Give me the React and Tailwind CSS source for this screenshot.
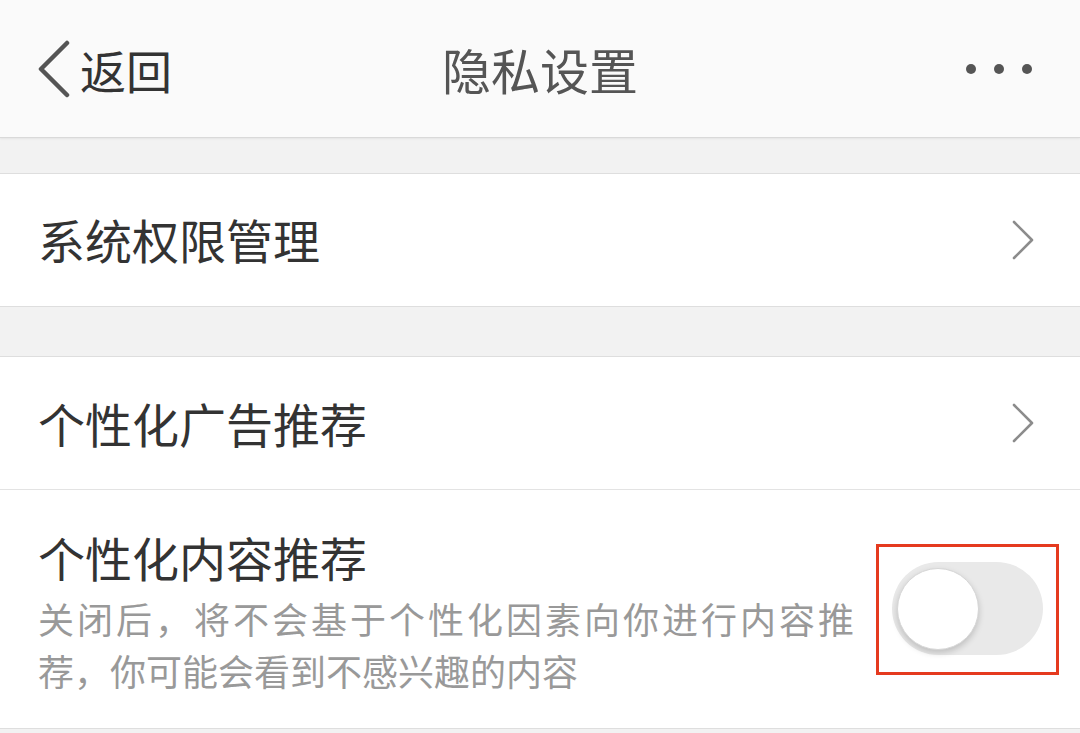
import React, { useState } from "react";

const font = { fontFamily: '"Noto Sans CJK SC", "Noto Sans", sans-serif' };

function ChevronRight() {
  return (
    <svg width="22" height="40" viewBox="0 0 22 40" fill="none">
      <path d="M2 2 L20 20 L2 38" stroke="#8c8c8c" strokeWidth="2.6" strokeLinecap="round" strokeLinejoin="round" />
    </svg>
  );
}

function ChevronLeft() {
  return (
    <svg width="36" height="58" viewBox="0 0 36 58" fill="none">
      <path d="M31 3 L5 29 L31 55" stroke="#555555" strokeWidth="4.5" strokeLinecap="round" strokeLinejoin="round" />
    </svg>
  );
}

function Toggle({ on, onChange }) {
  return (
    <button
      type="button"
      onClick={() => onChange(!on)}
      className={`relative w-[151px] h-[93px] rounded-full ${on ? "bg-[#4cd964]" : "bg-[#e9e9e9]"}`}
    >
      <span
        className={`absolute top-[6px] w-[82px] h-[82px] rounded-full bg-white border border-[#d6d6d6] shadow-[0_3px_6px_rgba(0,0,0,0.18)] ${
          on ? "left-[64px]" : "left-[5px]"
        }`}
      />
    </button>
  );
}

export default function App() {
  const [personalized, setPersonalized] = useState(false);

  return (
    <div className="w-[1080px] h-[733px] bg-[#f2f2f2] overflow-hidden" style={font}>
      {/* Header */}
      <div className="h-[138px] bg-[#fafafa] border-b border-[#d9d9d9] shadow-[0_1px_2px_rgba(0,0,0,0.06)] flex items-center justify-between pl-[36px] pr-[48px] relative">
        <button className="flex items-center gap-[8px] text-[#333333]">
          <ChevronLeft />
          <span className="text-[46px] leading-none">返回</span>
        </button>
        <h1 className="absolute left-1/2 -translate-x-1/2 text-[49px] text-[#555555] leading-none">
          隐私设置
        </h1>
        <div className="flex items-center gap-[18px]">
          <span className="w-[10px] h-[10px] rounded-full bg-[#555555]" />
          <span className="w-[10px] h-[10px] rounded-full bg-[#555555]" />
          <span className="w-[10px] h-[10px] rounded-full bg-[#555555]" />
        </div>
      </div>

      {/* Group 1 */}
      <div className="mt-[35px] bg-white border-y border-[#dedede]">
        <div className="h-[132px] flex items-center justify-between pl-[38px] pr-[46px]">
          <span className="text-[47px] text-[#333333] leading-none pb-[4px]">系统权限管理</span>
          <ChevronRight />
        </div>
      </div>

      {/* Group 2 */}
      <div className="mt-[49px] bg-white border-y border-[#dedede]">
        <div className="h-[133px] flex items-center justify-between pl-[38px] pr-[46px] border-b border-[#e3e3e3]">
          <span className="text-[47px] text-[#333333] leading-none pb-[2px]">个性化广告推荐</span>
          <ChevronRight />
        </div>
        <div className="h-[238px] flex items-center justify-between pl-[38px] pr-[21px]">
          <div className="pt-[6px]">
            <div className="text-[47px] leading-[56px] text-[#333333]">个性化内容推荐</div>
            <p className="mt-[7px] w-[816px] text-[36px] leading-[52px] text-[#999999] text-justify">
              关闭后，将不会基于个性化因素向你进行内容推荐，你可能会看到不感兴趣的内容
            </p>
          </div>
          <div className="border-[3px] border-[#e53a1f] pt-[15px] pb-[12px] px-[13px]">
            <Toggle on={personalized} onChange={setPersonalized} />
          </div>
        </div>
      </div>
    </div>
  );
}
